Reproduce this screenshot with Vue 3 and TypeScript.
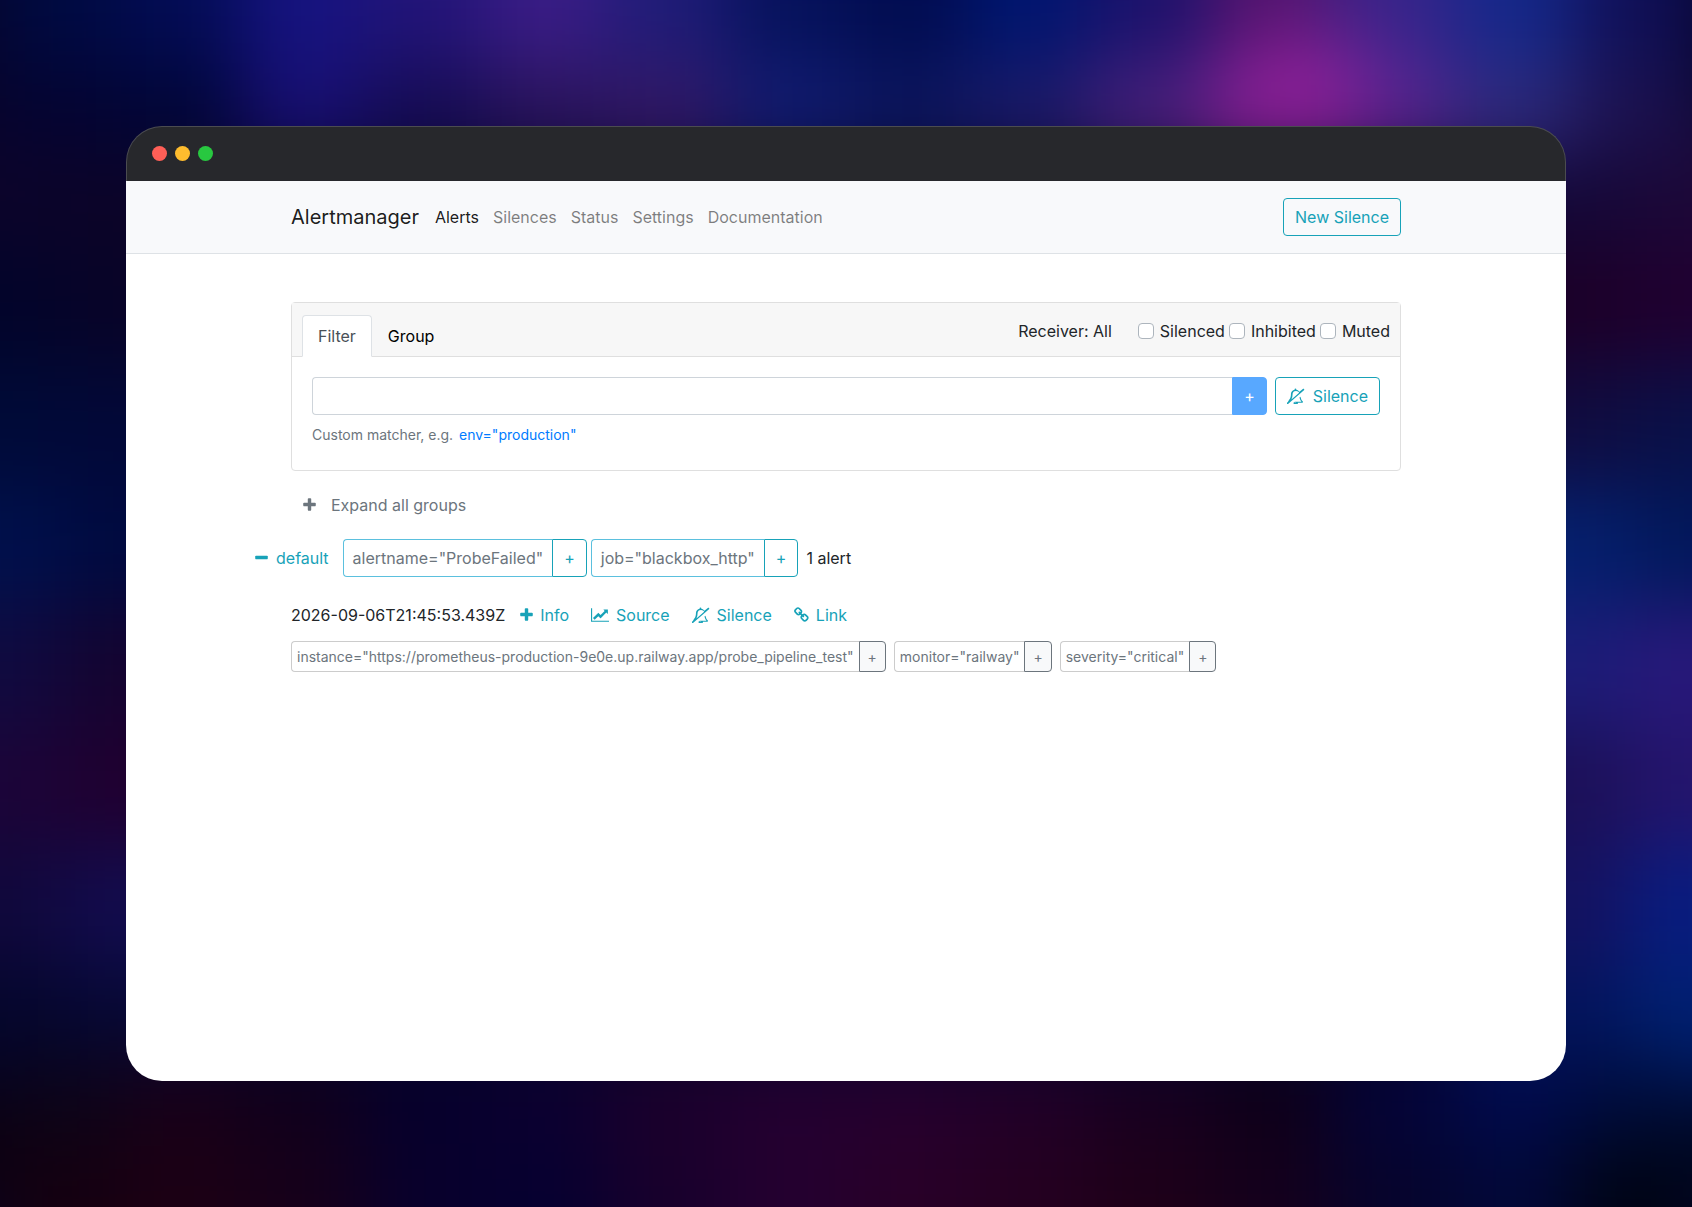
<script setup lang="ts">
import { ref } from 'vue'

interface Matcher { text: string }
interface Patch { x: number; y: number; w: number; h: number; fill: string }

const navLinks = ['Alerts', 'Silences', 'Status', 'Settings', 'Documentation']
const tabs = ['Filter', 'Group']
const activeTab = ref('Filter')
const matcher = ref('')
const toggles = ref([
  { id: 'silenced', label: 'Silenced', on: false },
  { id: 'inhibited', label: 'Inhibited', on: false },
  { id: 'muted', label: 'Muted', on: false },
])
const groupMatchers: Matcher[] = [{ text: 'alertname="ProbeFailed"' }, { text: 'job="blackbox_http"' }]
const alertLabels: Matcher[] = [
  { text: 'instance="https://prometheus-production-9e0e.up.railway.app/probe_pipeline_test"' },
  { text: 'monitor="railway"' },
  { text: 'severity="critical"' },
]

// Wallpaper: strips of colour round the window, blurred into one another.
const wallpaper: Patch[] = []
function strip(colors: string, x: number, y: number, w: number, h: number, dx: number, dy: number) {
  colors.split(' ').forEach((c, i) => {
    wallpaper.push({ x: x + i * dx, y: y + i * dy, w, h, fill: '#' + c })
  })
}
strip('0c042a 02042a 000a38 00104c 100a40 1c0438 10083c 04062c 0a0010', -140, 126, 203, 121, 0, 120)
strip('0c0428 080428 020838 000a40 140430 200030 120c4e 060834 1c0018', 63, 126, 160, 121, 0, 120)
strip('140838 1c0028 100c40 04206e 1c1c78 1c1058 141260 02145c 000a38', 1460, 126, 170, 121, 0, 120)
strip('1c0838 200030 0a1048 02185c 28187a 24146c 081c80 002070 000824', 1629, 126, 203, 121, 0, 120)
strip('000a42 030c55 161380 221478 3a1c86 1f1c78 06125c 010c50 001670 1c126c 54146e 38248a 14288a 101058', 0, -140, 122, 203, 121, 0)
strip('040432 010638 180f72 160c54 2a145c 331866 121c72 0c165e 1c1a68 48207c 8c2098 5a2490 2e2a7c 1c1250', 0, 63, 122, 90, 121, 0)
strip('0c0418 180018 10001c 06002c 0c0030 1c002c 240030 26002e 220028 180020 0e0018 040438 000a4c 000c3a', 0, 1060, 122, 85, 121, 0)
strip('140010 1c0014 16001a 08002c 060030 18002c 240030 280028 240020 1e0018 14001c 06042c 020838 000414', 0, 1144, 122, 203, 121, 0)
wallpaper.push({ x: 1250, y: 40, w: 110, h: 110, fill: '#8c2098' })

const plus = 'M1600 736v192q0 40-28 68t-68 28h-416v416q0 40-28 68t-68 28h-192q-40 0-68-28t-28-68v-416h-416q-40 0-68-28t-28-68v-192q0-40 28-68t68-28h416v-416q0-40 28-68t68-28h192q40 0 68 28t28 68v416h416q40 0 68 28t28 68z'
const minus = 'M1600 736v192q0 40-28 68t-68 28h-1216q-40 0-68-28t-28-68v-192q0-40 28-68t68-28h1216q40 0 68 28t28 68z'
const chart = 'M2048 1536v128h-2048v-1536h128v1408h1920zM1920 288v435q0 21-19.5 29.5t-35.5-7.5l-121-121-633 633q-10 10-23 10t-23-10l-233-233-416 416-192-192 585-585q10-10 23-10t23 10l233 233 464-464-121-121q-16-16-7.5-35.5t29.5-19.5h435q14 0 23 9t9 23z'
const chain = 'M1520 1216q0-40-28-68l-208-208q-28-28-68-28-42 0-72 32 3 3 19 18.5t21.5 21.5 15 19 13 25.5 3.5 27.5q0 40-28 68t-68 28q-15 0-27.5-3.5t-25.5-13-19-15-21.5-21.5-18.5-19q-33 31-33 73 0 40 28 68l206 207q27 27 68 27 40 0 68-26l147-146q28-28 28-67zm-703-705q0-40-28-68l-206-207q-28-28-68-28-39 0-68 27l-147 146q-28 28-28 67 0 40 28 68l208 208q27 27 68 27 42 0 72-31-3-3-19-18.5t-21.5-21.5-15-19-13-25.5-3.5-27.5q0-40 28-68t68-28q15 0 27.5 3.5t25.5 13 19 15 21.5 21.5 18.5 19q33-31 33-73zm895 705q0 120-85 203l-147 146q-83 83-203 83-121 0-204-85l-206-207q-83-83-83-203 0-123 88-209l-88-88q-86 88-208 88-120 0-204-84l-208-208q-84-84-84-204t85-203l147-146q83-83 203-83 121 0 204 85l206 207q83 83 83 203 0 123-88 209l88 88q86-88 208-88 120 0 204 84l208 208q84 84 84 204z'
const bellSlash = 'M1056 1696q0-16-16-16-59 0-101.5-42.5t-42.5-101.5q0-16-16-16t-16 16q0 73 51.5 124.5t124.5 51.5q16 0 16-16zm-552-403l877-760q-42-88-132.5-146.5t-223.5-58.5q-93 0-169.5 31.5t-121.5 80.5-69 103-24 105q0 384-137 645zm1320 243q0 52-38 90t-90 38h-448q0 106-75 181t-181 75-180.5-74.5-75.5-180.5l149-129h757q-166-187-227-459l111-97q61 356 298 556zm56-1470l84 96q8 10 7.5 23.5t-10.5 22.5l-1872 1622q-10 8-23.5 7t-21.5-11l-84-96q-8-10-7.5-23.5t10.5-21.5l186-161q-19-32-19-66 50-42 91-88t85-119.5 74.5-158.5 50-206 19.5-260q0-152 117-282.5t307-158.5q-8-19-8-39 0-40 28-68t68-28 68 28 28 68q0 20-8 39 124 18 219 82.5t148 157.5l418-363q10-8 23.5-7t21.5 11z'

const actions = [
  { label: 'Info', path: plus, box: '192 0 1408 1792', width: 13 },
  { label: 'Source', path: chart, box: '0 0 2048 1792', width: 18 },
  { label: 'Silence', path: bellSlash, box: '0 0 2048 1792', width: 18 },
  { label: 'Link', path: chain, box: '80 0 1664 1792', width: 15 },
]
</script>

<template>
  <div class="backdrop">
    <svg class="wallpaper" viewBox="0 0 1692 1207" preserveAspectRatio="none" aria-hidden="true">
      <defs>
        <filter id="soften" filterUnits="userSpaceOnUse" x="-140" y="-140" width="1972" height="1487" color-interpolation-filters="sRGB">
          <feGaussianBlur stdDeviation="38" />
        </filter>
      </defs>
      <g filter="url(#soften)">
        <rect x="-140" y="-140" width="1972" height="1487" fill="#06042a" />
        <rect v-for="(p, i) in wallpaper" :key="i" :x="p.x" :y="p.y" :width="p.w" :height="p.h" :fill="p.fill" />
      </g>
    </svg>

    <div class="window">
      <div class="titlebar">
        <span class="dot close"></span>
        <span class="dot minimize"></span>
        <span class="dot zoom"></span>
      </div>

      <header class="navbar">
        <div class="container nav-row">
          <a class="brand" href="#">Alertmanager</a>
          <nav class="links">
            <a v-for="(link, i) in navLinks" :key="link" href="#" :class="{ current: i === 0 }">{{ link }}</a>
          </nav>
          <button class="btn outline" type="button">New Silence</button>
        </div>
      </header>

      <main class="page">
        <div class="container">
          <section class="card">
            <div class="card-header">
              <div class="tabs" role="tablist">
                <button
                  v-for="tab in tabs"
                  :key="tab"
                  type="button"
                  role="tab"
                  class="tab"
                  :class="{ active: tab === activeTab }"
                  :aria-selected="tab === activeTab"
                  @click="activeTab = tab"
                >{{ tab }}</button>
              </div>
              <div class="options">
                <span class="receiver">Receiver: All</span>
                <label v-for="t in toggles" :key="t.id" class="check" :for="t.id">
                  <input :id="t.id" v-model="t.on" type="checkbox" />
                  <span>{{ t.label }}</span>
                </label>
              </div>
            </div>
            <div class="card-body">
              <div class="filter-row">
                <div class="input-group">
                  <input v-model="matcher" class="matcher" type="text" aria-label="Custom matcher" />
                  <button class="btn add" type="button" disabled>+</button>
                </div>
                <button class="btn outline" type="button">
                  <svg class="icon" width="18" height="16" viewBox="0 0 2048 1792"><path :d="bellSlash" /></svg>
                  Silence
                </button>
              </div>
              <p class="hint">Custom matcher, e.g. <a href="#">env="production"</a></p>
            </div>
          </section>

          <button class="expand" type="button">
            <svg class="icon" width="13" height="16" viewBox="192 0 1408 1792"><path :d="plus" /></svg>
            Expand all groups
          </button>

          <section class="group">
            <div class="group-row">
              <button class="toggle" type="button">
                <svg class="icon" width="13" height="16" viewBox="192 0 1408 1792"><path :d="minus" /></svg>
                default
              </button>
              <div class="chips">
                <span v-for="m in groupMatchers" :key="m.text" class="chip large">
                  <span class="chip-text">{{ m.text }}</span>
                  <button type="button" class="chip-add">+</button>
                </span>
              </div>
              <span class="count">1 alert</span>
            </div>

            <article class="alert">
              <div class="alert-head">
                <time class="stamp">2026-09-06T21:45:53.439Z</time>
                <div class="actions">
                  <button v-for="a in actions" :key="a.label" type="button" class="action">
                    <svg class="icon" :width="a.width" height="16" :viewBox="a.box"><path :d="a.path" /></svg>
                    {{ a.label }}
                  </button>
                </div>
              </div>
              <div class="labels">
                <span v-for="l in alertLabels" :key="l.text" class="chip small">
                  <span class="chip-text">{{ l.text }}</span>
                  <button type="button" class="chip-add">+</button>
                </span>
              </div>
            </article>
          </section>
        </div>
      </main>
    </div>
  </div>
</template>

<style>
body {
  margin: 0;
  background: #06022a;
}
</style>

<style scoped>
* {
  box-sizing: border-box;
}

.backdrop {
  position: relative;
  display: flex;
  min-height: 100vh;
  padding: 126px;
  font: 16px/24px Inter, "Liberation Sans", sans-serif;
  color: #212529;
}
.wallpaper {
  position: absolute;
  inset: 0;
  width: 100%;
  height: 100%;
}

.window {
  position: relative;
  display: flex;
  flex: 1;
  flex-direction: column;
  min-width: 0;
}

.titlebar {
  display: flex;
  align-items: center;
  gap: 8px;
  height: 55px;
  padding: 0 25px 2px;
  border: 1px solid #4b4c50;
  border-bottom: 0;
  border-radius: 36px 36px 0 0;
  background: #27282c;
}

.dot {
  width: 15px;
  height: 15px;
  border-radius: 50%;
}
.close { background: #ff5f57; }
.minimize { background: #febc2e; }
.zoom { background: #28c840; }

.container {
  width: 100%;
  max-width: 1140px;
  margin: 0 auto;
  padding: 0 15px;
}

.navbar {
  padding: 17px 0;
  border-bottom: 1px solid #dee2e6;
  background: #f8f9fb;
}
.nav-row {
  display: flex;
  align-items: center;
}
a {
  text-decoration: none;
}
.brand {
  margin-right: 9px;
  font-size: 20px;
  color: rgba(0, 0, 0, 0.9);
}
.links {
  display: flex;
  flex: 1;
}
.links a {
  padding: 0 7px;
  color: rgba(0, 0, 0, 0.5);
}
.links a.current {
  color: rgba(0, 0, 0, 0.9);
}

button {
  margin: 0;
  padding: 0;
  border: 0;
  background: none;
  font: inherit;
  color: inherit;
  cursor: pointer;
}
.btn {
  height: 38px;
  padding: 0 11px;
  border: 1px solid #17a2b8;
  border-radius: 4px;
  white-space: nowrap;
}
.outline {
  display: flex;
  align-items: center;
  gap: 8px;
  color: #17a2b8;
}
.icon {
  flex: none;
  fill: currentColor;
}

.page {
  flex: 1;
  padding: 48px 0;
  border-radius: 0 0 36px 36px;
  background: #fff;
}
.card {
  border: 1px solid #dfdfdf;
  border-radius: 4px;
}
.card-header {
  display: flex;
  justify-content: space-between;
  padding: 12px 10px 0;
  border-bottom: 1px solid #dfdfdf;
  background: #f7f7f7;
}
.tabs {
  display: flex;
  margin-bottom: -1px;
}
.tab {
  height: 42px;
  padding: 0 15px;
  border: 1px solid transparent;
  border-radius: 4px 4px 0 0;
  color: #000;
}
.tab.active {
  border-color: #dee2e6 #dee2e6 #fff;
  background: #fff;
  color: #495057;
}
.options {
  display: flex;
  align-items: center;
  gap: 4px;
  height: 32px;
}
.receiver {
  margin-right: 22px;
}
.check {
  display: flex;
  align-items: center;
  gap: 6px;
}
.check input {
  appearance: none;
  width: 16px;
  height: 16px;
  margin: 0;
  border: 1px solid #adb5bd;
  border-radius: 4px;
  background: #fff;
}
.check input:checked {
  background: #007bff;
}

.card-body {
  padding: 20px 20px 23px;
}
.filter-row {
  display: flex;
  gap: 8px;
}
.input-group {
  display: flex;
  flex: 1;
}
.matcher {
  flex: 1;
  min-width: 0;
  height: 38px;
  padding: 0 12px;
  border: 1px solid #ced4da;
  border-right: 0;
  border-radius: 4px 0 0 4px;
  font: inherit;
}
.add {
  border-color: #58a8ff;
  border-radius: 0 4px 4px 0;
  background: #58a8ff;
  color: #fff;
}
.hint {
  margin: 8px 0 0;
  font-size: 14px;
  color: #6c757d;
}
.hint a {
  margin-left: 2px;
  color: #007bff;
}

.expand {
  display: flex;
  align-items: center;
  gap: 15px;
  height: 38px;
  margin-top: 15px;
  padding: 0 12px;
  color: #6c757d;
}

.group-row {
  display: flex;
  align-items: center;
  margin: 15px 0 0 -36px;
}
.toggle {
  display: flex;
  align-items: center;
  gap: 8px;
  margin-right: 14px;
  color: #17a2b8;
}
.chips {
  display: flex;
  gap: 4px;
}
.count {
  margin-left: 8px;
}

.chip {
  display: flex;
}
.chip-text {
  display: flex;
  align-items: center;
  border: 1px solid;
  border-right: 0;
  border-radius: 4px 0 0 4px;
  color: #6c757d;
}
.chip-add {
  border: 1px solid;
  border-radius: 0 4px 4px 0;
}
.large {
  height: 38px;
}
.large .chip-text {
  padding: 0 9px;
  border-color: #5bc0de;
}
.large .chip-add {
  padding: 0 11px;
  border-color: #17a2b8;
  color: #17a2b8;
}
.small {
  height: 31px;
  font-size: 14px;
}
.small .chip-text {
  padding: 0 5px;
  border-color: #ccc;
}
.small .chip-add {
  padding: 0 8px;
  border-color: #6c757d;
  background: #f8f9fa;
  color: #6c757d;
}

.alert-head {
  display: flex;
  align-items: center;
  gap: 15px;
  height: 38px;
  margin-top: 19px;
}
.actions {
  display: flex;
  gap: 22px;
}
.action {
  display: flex;
  align-items: center;
  gap: 7px;
  color: #17a2b8;
}
.labels {
  display: flex;
  flex-wrap: wrap;
  gap: 8px;
  margin-top: 7px;
}
</style>
